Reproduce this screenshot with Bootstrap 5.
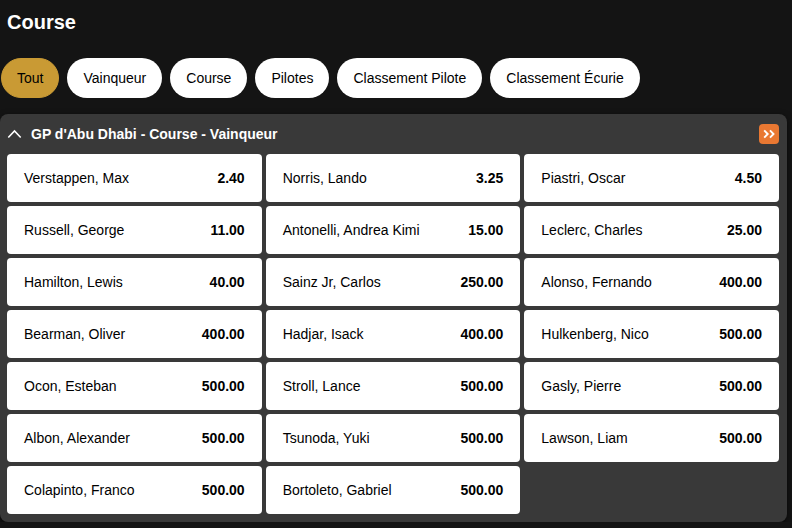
<!DOCTYPE html>
<html lang="fr">
<head>
<meta charset="utf-8">
<meta name="viewport" content="width=device-width, initial-scale=1">
<title>Course</title>
<link href="https://cdn.jsdelivr.net/npm/bootstrap@5.3.0/dist/css/bootstrap.min.css" rel="stylesheet">
<style>
  body { background: #141414; color: #fff; font-family: "Liberation Sans", Arial, sans-serif; font-size: 14px; line-height: 20px; }
  .page-title { font-size: 20px; line-height: 24px; padding: 10px 7px 0; margin-bottom: 24px; }
  .filters { padding: 0 1px; margin-bottom: 16px; }
  .chip { --bs-btn-font-size: 14px; --bs-btn-line-height: 20px; --bs-btn-padding-x: 15px; --bs-btn-padding-y: 9px;
    --bs-btn-color: #000; --bs-btn-bg: #fff; --bs-btn-hover-bg: #eee; --bs-btn-active-bg: #c99a34; --bs-btn-active-border-color: #c99a34; --bs-btn-active-color: #000; }
  .market { background: #393939; border-radius: 8px; margin-right: 5px; padding: 0 8px 8px 7px; box-shadow: 0 2px 6px #0009; }
  .market-head { height: 40px; }
  .market-title { font-size: 14px; line-height: 20px; }
  .market-toggle { gap: 9px; }
  .boost { width: 20px; height: 20px; border-radius: 4px; background: #e97832; }
  .odds { display: grid; grid-template-columns: repeat(3, minmax(0, 1fr)); gap: 4px; }
  .odd { --bs-btn-font-size: 14px; --bs-btn-line-height: 20px; --bs-btn-padding-x: 16px; --bs-btn-padding-y: 13px; --bs-btn-border-radius: 4px;
    --bs-btn-color: #000; --bs-btn-bg: #fff; --bs-btn-hover-bg: #f0f0f0; --bs-btn-active-bg: #e5e5e5; }
</style>
</head>
<body>
<main>
  <h1 class="page-title fw-bold">Course</h1>
  <div class="filters d-flex flex-wrap gap-2" role="group" aria-label="Filtres">
    <button type="button" class="btn chip rounded-pill active" aria-pressed="true">Tout</button>
    <button type="button" class="btn chip rounded-pill">Vainqueur</button>
    <button type="button" class="btn chip rounded-pill">Course</button>
    <button type="button" class="btn chip rounded-pill">Pilotes</button>
    <button type="button" class="btn chip rounded-pill">Classement Pilote</button>
    <button type="button" class="btn chip rounded-pill">Classement Écurie</button>
  </div>
  <section class="market">
    <div class="market-head d-flex align-items-center justify-content-between">
      <h2 class="market-title m-0 d-flex">
        <button type="button" class="market-toggle border-0 bg-transparent text-white p-0 d-flex align-items-center" data-bs-toggle="collapse" data-bs-target="#odds" aria-expanded="true" aria-controls="odds">
          <svg width="15" height="10" viewBox="0 0 15 10" fill="none" stroke="#fff" stroke-width="1.6" aria-hidden="true"><path d="M1.3 8.5 7.5 2l6.2 6.5"/></svg>
          <strong>GP d'Abu Dhabi - Course - Vainqueur</strong>
        </button>
      </h2>
      <button type="button" class="boost border-0 p-0 d-flex align-items-center justify-content-center" aria-label="Plus">
        <svg width="12" height="10" viewBox="0 0 12 10" fill="none" stroke="#fff" stroke-width="1.9" aria-hidden="true"><path d="M1.2 1.4 4.7 5 1.2 8.6M7 1.4 10.5 5 7 8.6"/></svg>
      </button>
    </div>
    <div class="collapse show" id="odds">
      <div class="odds">
        <button type="button" class="btn odd d-flex justify-content-between"><span>Verstappen, Max</span><strong>2.40</strong></button>
        <button type="button" class="btn odd d-flex justify-content-between"><span>Norris, Lando</span><strong>3.25</strong></button>
        <button type="button" class="btn odd d-flex justify-content-between"><span>Piastri, Oscar</span><strong>4.50</strong></button>
        <button type="button" class="btn odd d-flex justify-content-between"><span>Russell, George</span><strong>11.00</strong></button>
        <button type="button" class="btn odd d-flex justify-content-between"><span>Antonelli, Andrea Kimi</span><strong>15.00</strong></button>
        <button type="button" class="btn odd d-flex justify-content-between"><span>Leclerc, Charles</span><strong>25.00</strong></button>
        <button type="button" class="btn odd d-flex justify-content-between"><span>Hamilton, Lewis</span><strong>40.00</strong></button>
        <button type="button" class="btn odd d-flex justify-content-between"><span>Sainz Jr, Carlos</span><strong>250.00</strong></button>
        <button type="button" class="btn odd d-flex justify-content-between"><span>Alonso, Fernando</span><strong>400.00</strong></button>
        <button type="button" class="btn odd d-flex justify-content-between"><span>Bearman, Oliver</span><strong>400.00</strong></button>
        <button type="button" class="btn odd d-flex justify-content-between"><span>Hadjar, Isack</span><strong>400.00</strong></button>
        <button type="button" class="btn odd d-flex justify-content-between"><span>Hulkenberg, Nico</span><strong>500.00</strong></button>
        <button type="button" class="btn odd d-flex justify-content-between"><span>Ocon, Esteban</span><strong>500.00</strong></button>
        <button type="button" class="btn odd d-flex justify-content-between"><span>Stroll, Lance</span><strong>500.00</strong></button>
        <button type="button" class="btn odd d-flex justify-content-between"><span>Gasly, Pierre</span><strong>500.00</strong></button>
        <button type="button" class="btn odd d-flex justify-content-between"><span>Albon, Alexander</span><strong>500.00</strong></button>
        <button type="button" class="btn odd d-flex justify-content-between"><span>Tsunoda, Yuki</span><strong>500.00</strong></button>
        <button type="button" class="btn odd d-flex justify-content-between"><span>Lawson, Liam</span><strong>500.00</strong></button>
        <button type="button" class="btn odd d-flex justify-content-between"><span>Colapinto, Franco</span><strong>500.00</strong></button>
        <button type="button" class="btn odd d-flex justify-content-between"><span>Bortoleto, Gabriel</span><strong>500.00</strong></button>
      </div>
    </div>
  </section>
</main>
<script src="https://cdn.jsdelivr.net/npm/bootstrap@5.3.0/dist/js/bootstrap.bundle.min.js"></script>
</body>
</html>
